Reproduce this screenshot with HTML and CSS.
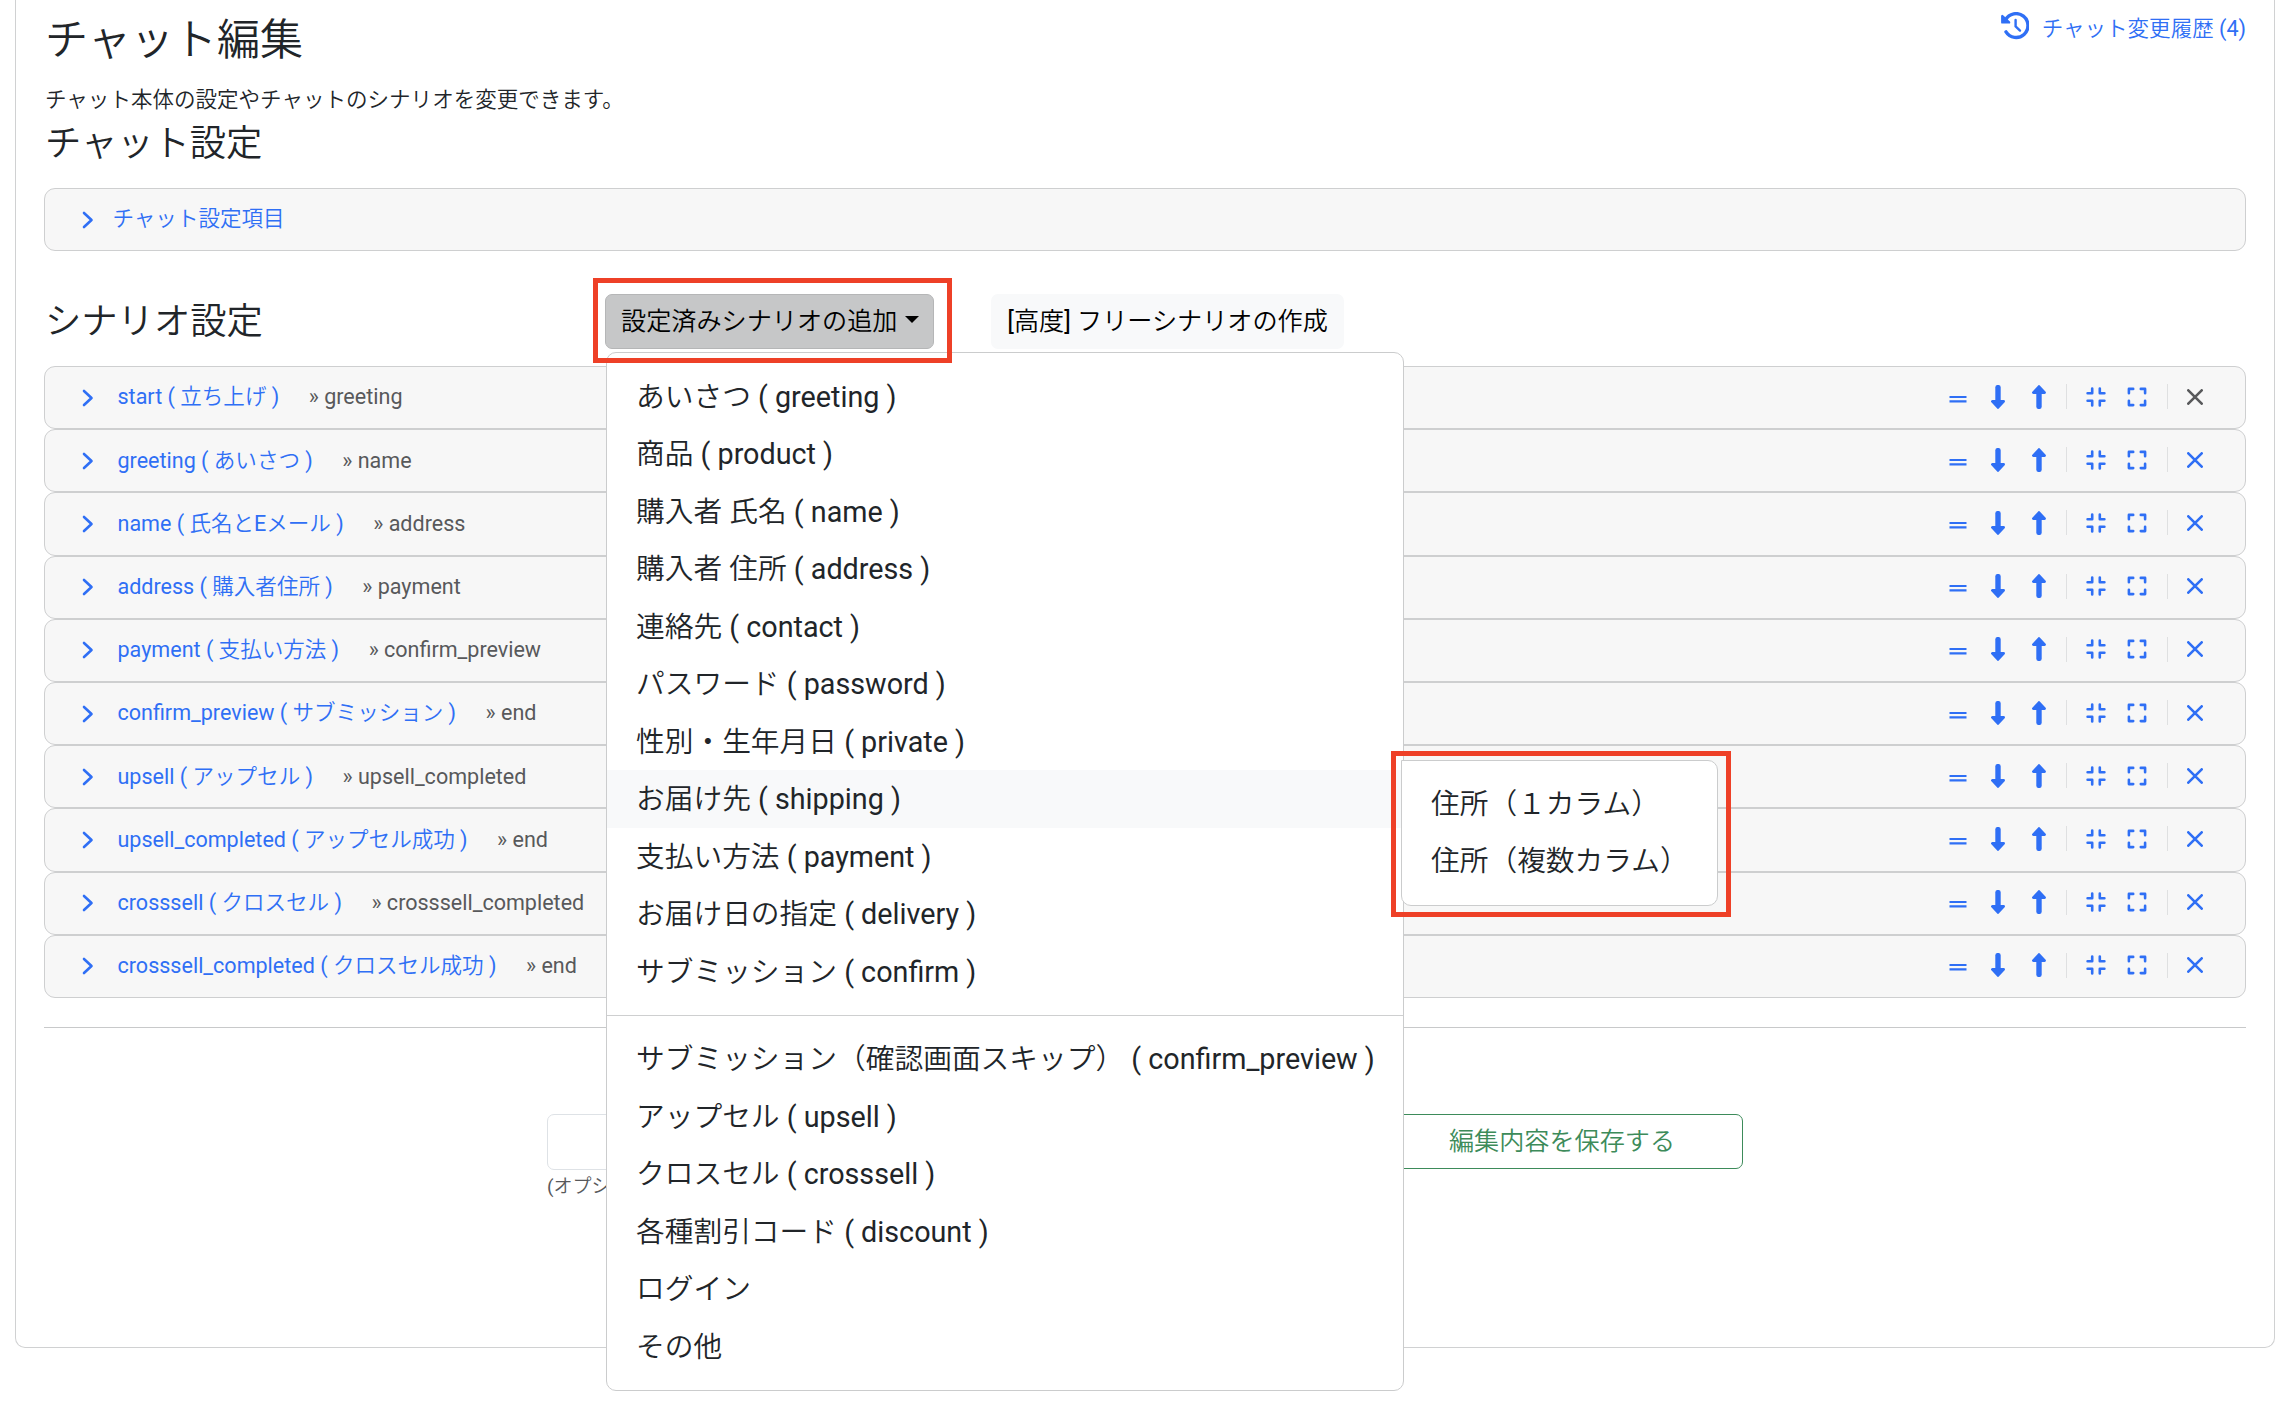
FILE: index.html
```html
<!DOCTYPE html>
<html lang="ja">
<head>
    <meta charset="UTF-8">
    <meta name="viewport" content="width=device-width, initial-scale=1.0">
    <title>チャット編集</title>
    <link rel="stylesheet" href="styles.css">
</head>
<body>
    <!-- Icons -->
    <svg class="sprite">
        <symbol id="chevron" viewBox="0 0 12 18"><path d="M2 2l7.5 7L2 16"/></symbol>
        <symbol id="equal" viewBox="0 0 18 8"><path d="M.5 2h17M.5 6.4h17"/></symbol>
        <symbol id="down" viewBox="0 0 14 24"><path d="M7 2.6v14" stroke-width="5.4"/><path d="M1.4 16.4h11.2L7 22.4z" stroke-width="2.8" fill="currentColor"/></symbol>
        <symbol id="up" viewBox="0 0 14 24"><path d="M7 21.4v-14" stroke-width="5.4"/><path d="M1.4 7.6h11.2L7 1.6z" stroke-width="2.8" fill="currentColor"/></symbol>
        <symbol id="compress" viewBox="0 0 20 20"><path d="M6.2 1.6v4.6H1.6M13.8 1.6v4.6h4.6M6.2 18.4v-4.6H1.6M13.8 18.4v-4.6h4.6"/></symbol>
        <symbol id="expand" viewBox="0 0 20 20"><path d="M1.9 6.2V1.9h4.3M13.8 1.9h4.3v4.3M1.9 13.8v4.3h4.3M13.8 18.1h4.3v-4.3"/></symbol>
        <symbol id="close" viewBox="0 0 16 16"><path d="M1.3 1.3l13.4 13.4M14.7 1.3L1.3 14.7"/></symbol>
        <symbol id="history" viewBox="0 0 28 28">
            <path d="M4.6 8.2A11.9 11.9 0 1 1 5 20.2" stroke-width="3.4" transform="translate(0 -.3)"/>
            <path d="M1.3 4v6.4h6.8z" stroke-width="2.4" fill="currentColor"/>
            <path d="M14.6 8v6.4l4.4 4.2" stroke-width="2.4"/>
        </symbol>
    </svg>

    <div class="page-card">
        <div class="page-header">
            <h1>チャット編集</h1>
            <a class="history-link"><svg class="icon-history"><use href="#history"/></svg>チャット変更履歴 (4)</a>
        </div>
        <p class="lead">チャット本体の設定やチャットのシナリオを変更できます。</p>
        <h2>チャット設定</h2>

        <div class="panel panel-settings">
            <svg class="chevron"><use href="#chevron"/></svg><a class="name">チャット設定項目</a>
        </div>

        <div class="toolbar">
            <h2>シナリオ設定</h2>
            <div class="dropdown">
                <button class="btn btn-toggle">設定済みシナリオの追加<span class="caret"></span></button>
                <div class="menu">
                    <a>あいさつ ( greeting )</a>
                    <a>商品 ( product )</a>
                    <a>購入者 氏名 ( name )</a>
                    <a>購入者 住所 ( address )</a>
                    <a>連絡先 ( contact )</a>
                    <a>パスワード ( password )</a>
                    <a>性別・生年月日 ( private )</a>
                    <a class="active">お届け先 ( shipping )</a>
                    <a>支払い方法 ( payment )</a>
                    <a>お届け日の指定 ( delivery )</a>
                    <a>サブミッション ( confirm )</a>
                    <hr>
                    <a>サブミッション（確認画面スキップ） ( confirm_preview )</a>
                    <a>アップセル ( upsell )</a>
                    <a>クロスセル ( crosssell )</a>
                    <a>各種割引コード ( discount )</a>
                    <a>ログイン</a>
                    <a>その他</a>
                    <div class="submenu">
                        <a>住所（１カラム）</a>
                        <a>住所（複数カラム）</a>
                        <div class="marker marker-submenu"></div>
                    </div>
                </div>
                <div class="marker marker-toggle"></div>
            </div>
            <button class="btn btn-light">[高度] フリーシナリオの作成</button>
        </div>

        <div class="scenarios">
            <div class="panel">
                <svg class="chevron"><use href="#chevron"/></svg><a class="name">start ( 立ち上げ )</a><span class="next">» greeting</span>
                <div class="actions"><svg class="i-equal"><use href="#equal"/></svg><svg class="i-arrow"><use href="#down"/></svg><svg class="i-arrow"><use href="#up"/></svg><i></i><svg class="i-size"><use href="#compress"/></svg><svg class="i-size"><use href="#expand"/></svg><i></i><svg class="i-close disabled"><use href="#close"/></svg></div>
            </div>
            <div class="panel">
                <svg class="chevron"><use href="#chevron"/></svg><a class="name">greeting ( あいさつ )</a><span class="next">» name</span>
                <div class="actions"><svg class="i-equal"><use href="#equal"/></svg><svg class="i-arrow"><use href="#down"/></svg><svg class="i-arrow"><use href="#up"/></svg><i></i><svg class="i-size"><use href="#compress"/></svg><svg class="i-size"><use href="#expand"/></svg><i></i><svg class="i-close"><use href="#close"/></svg></div>
            </div>
            <div class="panel">
                <svg class="chevron"><use href="#chevron"/></svg><a class="name">name ( 氏名とEメール )</a><span class="next">» address</span>
                <div class="actions"><svg class="i-equal"><use href="#equal"/></svg><svg class="i-arrow"><use href="#down"/></svg><svg class="i-arrow"><use href="#up"/></svg><i></i><svg class="i-size"><use href="#compress"/></svg><svg class="i-size"><use href="#expand"/></svg><i></i><svg class="i-close"><use href="#close"/></svg></div>
            </div>
            <div class="panel">
                <svg class="chevron"><use href="#chevron"/></svg><a class="name">address ( 購入者住所 )</a><span class="next">» payment</span>
                <div class="actions"><svg class="i-equal"><use href="#equal"/></svg><svg class="i-arrow"><use href="#down"/></svg><svg class="i-arrow"><use href="#up"/></svg><i></i><svg class="i-size"><use href="#compress"/></svg><svg class="i-size"><use href="#expand"/></svg><i></i><svg class="i-close"><use href="#close"/></svg></div>
            </div>
            <div class="panel">
                <svg class="chevron"><use href="#chevron"/></svg><a class="name">payment ( 支払い方法 )</a><span class="next">» confirm_preview</span>
                <div class="actions"><svg class="i-equal"><use href="#equal"/></svg><svg class="i-arrow"><use href="#down"/></svg><svg class="i-arrow"><use href="#up"/></svg><i></i><svg class="i-size"><use href="#compress"/></svg><svg class="i-size"><use href="#expand"/></svg><i></i><svg class="i-close"><use href="#close"/></svg></div>
            </div>
            <div class="panel">
                <svg class="chevron"><use href="#chevron"/></svg><a class="name">confirm_preview ( サブミッション )</a><span class="next">» end</span>
                <div class="actions"><svg class="i-equal"><use href="#equal"/></svg><svg class="i-arrow"><use href="#down"/></svg><svg class="i-arrow"><use href="#up"/></svg><i></i><svg class="i-size"><use href="#compress"/></svg><svg class="i-size"><use href="#expand"/></svg><i></i><svg class="i-close"><use href="#close"/></svg></div>
            </div>
            <div class="panel">
                <svg class="chevron"><use href="#chevron"/></svg><a class="name">upsell ( アップセル )</a><span class="next">» upsell_completed</span>
                <div class="actions"><svg class="i-equal"><use href="#equal"/></svg><svg class="i-arrow"><use href="#down"/></svg><svg class="i-arrow"><use href="#up"/></svg><i></i><svg class="i-size"><use href="#compress"/></svg><svg class="i-size"><use href="#expand"/></svg><i></i><svg class="i-close"><use href="#close"/></svg></div>
            </div>
            <div class="panel">
                <svg class="chevron"><use href="#chevron"/></svg><a class="name">upsell_completed ( アップセル成功 )</a><span class="next">» end</span>
                <div class="actions"><svg class="i-equal"><use href="#equal"/></svg><svg class="i-arrow"><use href="#down"/></svg><svg class="i-arrow"><use href="#up"/></svg><i></i><svg class="i-size"><use href="#compress"/></svg><svg class="i-size"><use href="#expand"/></svg><i></i><svg class="i-close"><use href="#close"/></svg></div>
            </div>
            <div class="panel">
                <svg class="chevron"><use href="#chevron"/></svg><a class="name">crosssell ( クロスセル )</a><span class="next">» crosssell_completed</span>
                <div class="actions"><svg class="i-equal"><use href="#equal"/></svg><svg class="i-arrow"><use href="#down"/></svg><svg class="i-arrow"><use href="#up"/></svg><i></i><svg class="i-size"><use href="#compress"/></svg><svg class="i-size"><use href="#expand"/></svg><i></i><svg class="i-close"><use href="#close"/></svg></div>
            </div>
            <div class="panel">
                <svg class="chevron"><use href="#chevron"/></svg><a class="name">crosssell_completed ( クロスセル成功 )</a><span class="next">» end</span>
                <div class="actions"><svg class="i-equal"><use href="#equal"/></svg><svg class="i-arrow"><use href="#down"/></svg><svg class="i-arrow"><use href="#up"/></svg><i></i><svg class="i-size"><use href="#compress"/></svg><svg class="i-size"><use href="#expand"/></svg><i></i><svg class="i-close"><use href="#close"/></svg></div>
            </div>
        </div>

        <hr class="divider">

        <div class="save-area">
            <div class="memo">
                <input type="text">
                <small>(オプシ</small>
            </div>
            <button class="btn btn-save">編集内容を保存する</button>
        </div>
    </div>
</body>
</html>
```

FILE: styles.css
```css
* {
    margin: 0;
    padding: 0;
    box-sizing: border-box;
}

html {
    font-size: 28.72px;
}

body {
    min-height: 1403px;
    font-family: Roboto, 'Noto Sans CJK JP DemiLight', 'Noto Sans CJK JP Light', 'Noto Sans CJK JP', sans-serif;
    line-height: 1.5;
    color: #212529;
    background: #fff;
}

svg {
    display: block;
    fill: none;
    stroke: currentColor;
    stroke-width: 2.6;
    stroke-linecap: round;
    stroke-linejoin: round;
}

.sprite {
    display: none;
}

.page-card {
    width: 2260px;
    height: 1348px;
    margin-left: 15px;
    padding: 0 28px;
    border: 1px solid #d0d1d2;
    border-top: none;
    border-radius: 0 0 10px 10px;
}

.page-header {
    display: flex;
    justify-content: space-between;
    align-items: flex-start;
    height: 83px;
    padding-top: 12px;
}

h1 {
    padding-top: 3px;
    font-size: 1.5rem;
    font-weight: 400;
    line-height: 1.2;
}

h2 {
    padding-top: 1px;
    font-size: 36.3px;
    font-weight: 400;
    line-height: 43px;
}

.history-link {
    display: flex;
    gap: 13px;
    font-size: .75rem;
    line-height: 33px;
    color: #2f6ff5;
}

.icon-history {
    width: 28px;
    height: 28px;
}

.lead {
    height: 38px;
    font-size: .75rem;
    line-height: 33px;
}

.lead,
h1,
h2 {
    padding-left: 1px;
}

.panel {
    display: flex;
    align-items: center;
    height: 63.2px;
    padding: 0 42px 0 36.5px;
    font-size: .75rem;
    background: #f7f7f7;
    border: 1px solid #cecfd0;
    border-radius: 11px;
}

.panel-settings {
    height: 63px;
    margin-top: 23px;
}

.panel-settings .name {
    margin-left: 19px;
}

.chevron {
    width: 12px;
    height: 18px;
    color: #2f6ff5;
}

.name {
    margin-left: 24px;
    color: #2f6ff5;
}

.next {
    margin-left: 29.5px;
    color: #58595b;
}

.toolbar {
    display: flex;
    align-items: center;
    height: 56px;
    margin-top: 42px;
}

.toolbar h2 {
    width: 561px;
}

.btn {
    height: 55px;
    padding-bottom: 4px;
    font-family: inherit;
    font-size: .875rem;
    color: #000;
    border: 1px solid transparent;
    border-radius: 7px;
    white-space: nowrap;
}

.btn-toggle {
    display: flex;
    align-items: center;
    width: 329px;
    padding-left: 15px;
    background: #c6c7c8;
    border-color: #b5b6b7;
}

.caret {
    margin-left: 8px;
    border-top: 7.5px solid;
    border-right: 7.5px solid transparent;
    border-left: 7.5px solid transparent;
}

.btn-light {
    width: 353px;
    margin-left: 57px;
    background: #f8f9fa;
}

/* Dropdown */
.dropdown {
    position: relative;
}

.menu,
.submenu {
    position: absolute;
    z-index: 1;
    background: #fff;
    border: 1px solid #cbcccd;
    border-radius: 10px;
}

.menu {
    top: 58px;
    left: 1px;
    width: 798px;
    padding: 15px 0;
}

.menu a,
.submenu a {
    display: block;
    height: 57.5px;
    padding: 0 29px;
    line-height: 58px;
    white-space: nowrap;
}

.menu a.active {
    background: #f8f9fa;
}

.menu hr {
    margin: 15px 0 14px;
    border: none;
    border-top: 1px solid #cecfd0;
}

.submenu {
    top: 407px;
    left: 794px;
    width: 317px;
    height: 146px;
    padding: 14px 0;
    border-top-left-radius: 0;
}

/* Red frames */
.marker {
    position: absolute;
    z-index: 2;
    border: 5px solid #ee4027;
}

.marker-toggle {
    top: -16px;
    left: -12px;
    width: 359px;
    height: 85px;
}

.marker-submenu {
    top: -10px;
    left: -11px;
    width: 340px;
    height: 166px;
}

.scenarios {
    margin-top: 17px;
}

.actions {
    display: flex;
    align-items: center;
    margin-left: auto;
    padding-bottom: 2px;
    color: #2f6ff5;
}

.actions i {
    width: 1px;
    height: 25px;
    margin: 0 19px 0 20px;
    background: #dfe0e1;
}

.i-equal {
    width: 18px;
    height: 8px;
    margin: 4px 24px 0 0;
    stroke-width: 2.2;
    stroke-linecap: butt;
}

.i-arrow {
    width: 14px;
    height: 24px;
}

.i-arrow + .i-arrow {
    margin-left: 27px;
}

.i-size {
    width: 20px;
    height: 20px;
}

.i-size + .i-size {
    margin-left: 21px;
}

.i-close {
    width: 16px;
    height: 16px;
}

.disabled {
    color: #58595b;
}

.divider {
    margin-top: 29px;
    border: none;
    border-top: 1px solid #c8c9ca;
}

.save-area {
    display: flex;
    justify-content: space-between;
    width: 1196px;
    margin: 86px 0 0 503px;
}

.memo {
    width: 700px;
}

.memo input {
    display: block;
    width: 100%;
    height: 56px;
    border: 1px solid #dee2e6;
    border-radius: 7px;
}

.memo small {
    display: block;
    font-size: 19px;
    line-height: 34px;
    color: #58595b;
}

.btn-save {
    width: 362px;
    color: #3d8b5a;
    background: #fff;
    border-color: #3d8b5a;
}
```
